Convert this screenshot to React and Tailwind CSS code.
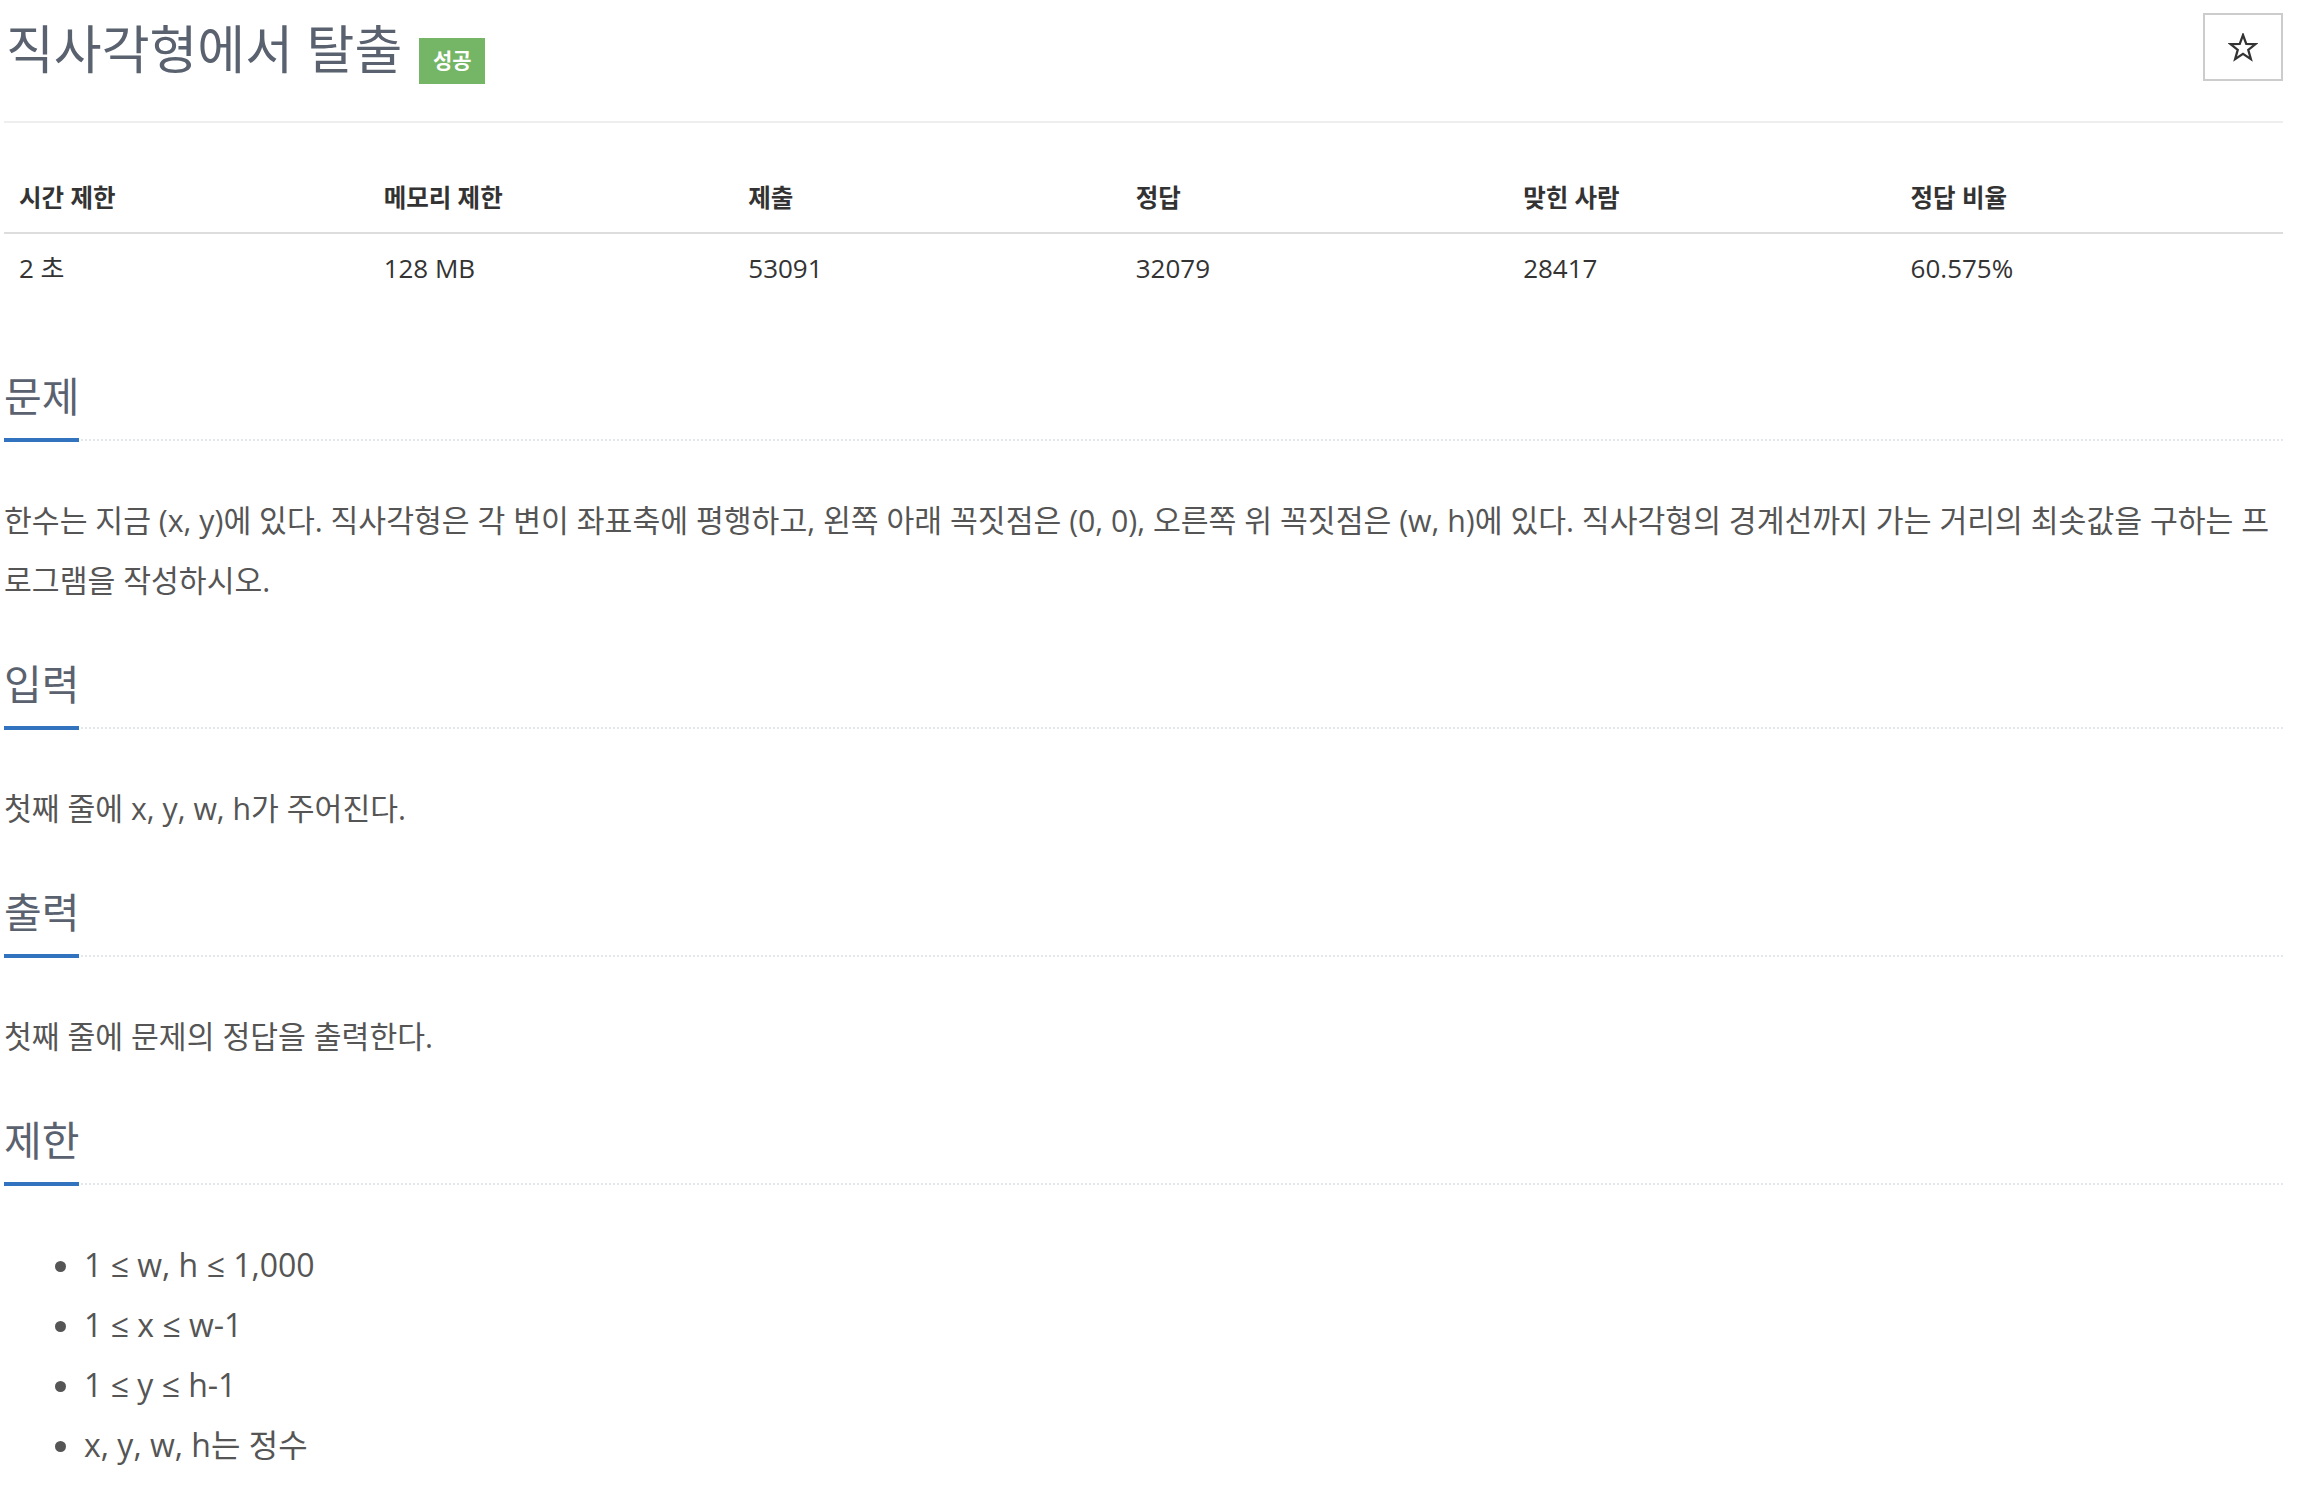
const stats = [
  { label: '시간 제한', value: '2 초' },
  { label: '메모리 제한', value: '128 MB' },
  { label: '제출', value: '53091' },
  { label: '정답', value: '32079' },
  { label: '맞힌 사람', value: '28417' },
  { label: '정답 비율', value: '60.575%' },
];

const Headline = ({ title }) => (
  <div className="border-b-2 border-dotted border-[#e4e7ee] mb-[50px]">
    <h2 className="inline-block text-[41px] leading-[48px] font-normal text-[#5a6270] pb-[18px] border-b-4 border-[#3273c0] mb-[-3px]">
      {title}
    </h2>
  </div>
);

const StarIcon = () => (
  <svg width="30" height="29" viewBox="0 0 24 23" fill="none" stroke="#333" strokeWidth="1.8" strokeLinejoin="miter">
    <polygon points="12,1.5 14.6,8.6 22,8.8 16.2,13.4 18.3,20.8 12,16.5 5.7,20.8 7.8,13.4 2,8.8 9.4,8.6" />
  </svg>
);

const App = () => {
  return (
    <div className="min-h-screen bg-white pl-[4px] pr-[33px] font-['Open_Sans','Noto_Sans_CJK_KR',sans-serif]">
      <div className="flex items-start justify-between h-[123px] border-b-2 border-[#eeeeee]">
        <div className="flex items-start">
          <h1 className="ml-[2px] mt-[19px] text-[52px] leading-[60px] font-normal text-[#5a6270]">직사각형에서 탈출</h1>
          <span className="ml-[17px] mt-[38px] w-[66px] h-[46px] flex items-center justify-center bg-[#74b566] text-white text-[21px] font-semibold">
            성공
          </span>
        </div>
        <button className="mt-[13px] w-[80px] h-[68px] border-2 border-[#cccccc] bg-white flex items-center justify-center">
          <StarIcon />
        </button>
      </div>

      <div className="mt-[37px] grid grid-cols-[16fr_16fr_17fr_17fr_17fr_17fr]">
        {stats.map((s) => (
          <div key={s.label} className="h-[74px] pt-[4px] flex items-center pl-[15px] border-b-2 border-[#dddddd] text-[24.5px] font-bold text-[#333]">
            {s.label}
          </div>
        ))}
        {stats.map((s) => (
          <div key={s.label + 'v'} className="h-[72px] pb-[4px] flex items-center pl-[15px] text-[26px] text-[#333]">
            {s.value}
          </div>
        ))}
      </div>

      <section className="mt-[66px]">
        <Headline title="문제" />
        <p className="text-[30.25px] leading-[60px] text-[#555555]">
          한수는 지금 (x, y)에 있다. 직사각형은 각 변이 좌표축에 평행하고, 왼쪽 아래 꼭짓점은 (0, 0), 오른쪽 위 꼭짓점은 (w, h)에 있다. 직사각형의 경계선까지 가는 거리의 최솟값을 구하는 프로그램을 작성하시오.
        </p>
      </section>

      <section className="mt-[49px]">
        <Headline title="입력" />
        <p className="text-[30.25px] leading-[60px] text-[#555555]">첫째 줄에 x, y, w, h가 주어진다.</p>
      </section>

      <section className="mt-[49px]">
        <Headline title="출력" />
        <p className="text-[30.25px] leading-[60px] text-[#555555]">첫째 줄에 문제의 정답을 출력한다.</p>
      </section>

      <section className="mt-[49px]">
        <Headline title="제한" />
        <ul className="list-disc pl-[80px] text-[32px] leading-[60px] text-[#555555]">
          <li>1 ≤ w, h ≤ 1,000</li>
          <li>1 ≤ x ≤ w-1</li>
          <li>1 ≤ y ≤ h-1</li>
          <li>x, y, w, h는 정수</li>
        </ul>
      </section>
    </div>
  );
};

export default App;
